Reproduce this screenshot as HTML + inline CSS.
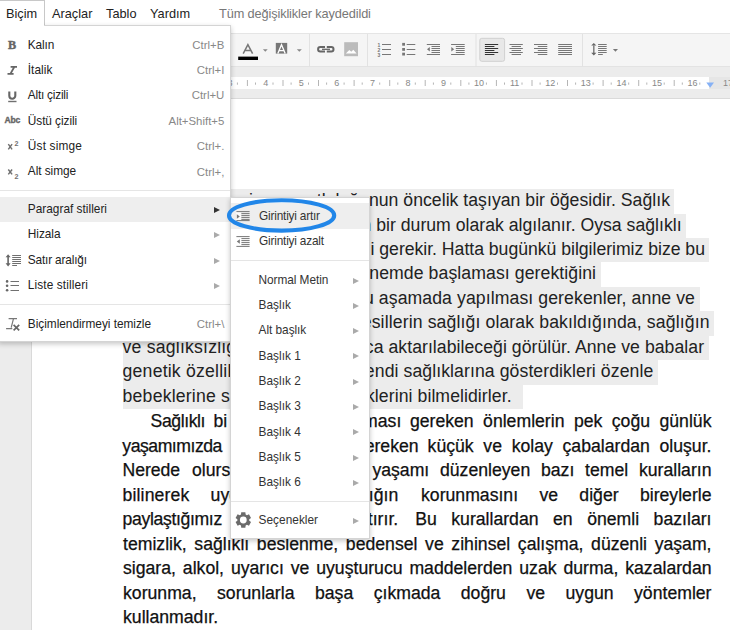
<!DOCTYPE html>
<html><head><meta charset="utf-8">
<style>
*{margin:0;padding:0;box-sizing:border-box}
html,body{width:730px;height:630px;overflow:hidden;background:#fff;font-family:"Liberation Sans",sans-serif;position:relative}
.abs{position:absolute}
svg{position:absolute;overflow:visible}
.mb{position:absolute;top:5.6px;font-size:12.75px;color:#222;line-height:16px;white-space:nowrap}
#toolbar{position:absolute;left:0;top:33px;width:730px;height:34px;background:#f5f5f5;border-top:1px solid #e5e5e5;border-bottom:1px solid #e3e3e3}
#band1{position:absolute;left:0;top:67px;width:730px;height:10px;background:#ececec}
#ruler{position:absolute;left:0;top:77px;width:709px;height:12px;background:#fff}
#band2{position:absolute;left:0;top:89px;width:730px;height:10px;background:#ececec;border-bottom:1px solid #dadada}
#leftgrey{position:absolute;left:0;top:99px;width:32px;height:531px;background:#ececec;border-right:1px solid #d9d9d9}
.tsep{position:absolute;top:38px;width:1px;height:24px;background:#e0e0e0}
.rn{position:absolute;top:78px;font-size:9px;color:#888;line-height:10px;white-space:nowrap}
.menu{position:absolute;background:#fff;border:1px solid #d4d4d4;box-shadow:0 2px 5px rgba(0,0,0,.22)}
.mi{position:absolute;white-space:nowrap;font-size:11.6px;color:#222;line-height:14px}
.sc{position:absolute;white-space:nowrap;font-size:11.2px;color:#888;line-height:14px;text-align:right}
.sep{position:absolute;height:1px;background:#e5e5e5}
.hl{position:absolute;background:#eee}
.ar{position:absolute;width:0;height:0;border-top:3px solid transparent;border-bottom:3px solid transparent;border-left:6px solid #aaa}
.hl1{position:absolute;left:122.5px;height:24.46px;background:#ececec}
.t1{position:absolute;height:24.46px;white-space:pre;font-size:17.65px;color:#222;line-height:20.8px}
.t2{position:absolute;height:24.5px;white-space:pre;font-size:17.65px;color:#111;line-height:20.8px;-webkit-text-stroke:0.25px #111}
.j{text-align:justify;text-align-last:justify;white-space:normal}
</style></head><body>

<!-- menubar -->
<div class="abs" style="left:0;top:0;width:45px;height:26px;border-top:1px solid #c8c8c8;border-right:1px solid #c8c8c8;background:#fff"></div>
<div class="mb" style="left:6px">Biçim</div>
<div class="mb" style="left:52px">Araçlar</div>
<div class="mb" style="left:106px">Tablo</div>
<div class="mb" style="left:150px">Yardım</div>
<div class="mb" style="left:219px;color:#777;letter-spacing:-0.12px">Tüm değişiklikler kaydedildi</div>

<div id="toolbar"></div>
<div id="band1"></div>
<div class="abs" style="left:709px;top:77px;width:21px;height:12px;background:#e6e6e6"></div><div id="ruler"></div>
<div id="band2"></div>
<div id="leftgrey"></div>
<svg style="left:0;top:0" width="730" height="100" viewBox="0 0 730 100">
 <!-- text color A -->
 <path d="M243.2 53.6 L247.9 44.6 L252.6 53.6 M244.8 50.6 H251" stroke="#777" stroke-width="1.5" fill="none"/>
 <rect x="238.2" y="56.6" width="19.8" height="3.4" fill="#000"/>
 <path d="M262.9 49.2 H267.7 L265.3 51.8 Z" fill="#888"/>
 <!-- highlight A -->
 <rect x="275.8" y="42.9" width="11.4" height="10.7" fill="#777"/>
 <path d="M277.8 53.6 L281.5 44.8 L285.2 53.6 M279.1 50.6 H283.9" stroke="#fff" stroke-width="1.3" fill="none"/>
 <path d="M296.8 49.2 H301.8 L299.3 51.8 Z" fill="#888"/>
 <rect x="309" y="34" width="1" height="33" fill="#e2e2e2"/>
 <!-- link -->
 <path d="M325 47.1 H320.3 A2.2 2.2 0 0 0 320.3 51.5 H325 M326.8 47.1 H331.3 A2.2 2.2 0 0 1 331.3 51.5 H326.8" stroke="#666" stroke-width="2" fill="none"/><path d="M322 49.3 H330" stroke="#666" stroke-width="1.3"/>
 <!-- image -->
 <rect x="344.2" y="42.2" width="13.8" height="14" fill="#bbb"/>
 <path d="M345.8 53.6 L349.3 50 L351.3 51.8 L353.3 49.8 L356.6 53.6 Z" fill="#fff"/>
 <rect x="367" y="34" width="1" height="33" fill="#e2e2e2"/>
 <!-- numbered list -->
 <g font-family="Liberation Sans" font-size="5" font-weight="bold" fill="#777"><text x="377.6" y="47">1</text><text x="377.6" y="52">2</text><text x="377.6" y="57">3</text></g>
 <g stroke="#777" stroke-width="1.1"><path d="M382 44.5 H391 M382 49.5 H391 M382 54.5 H391"/></g>
 <!-- bullet list -->
 <g fill="#777"><rect x="402.2" y="42.9" width="2.8" height="2.8"/><rect x="402.2" y="48" width="2.8" height="2.8"/><rect x="402.2" y="52.7" width="2.8" height="2.8"/></g>
 <g stroke="#777" stroke-width="1.1"><path d="M406.7 44.5 H415.3 M406.7 49.5 H415.3 M406.7 54.5 H415.3"/></g>
 <!-- decrease indent -->
 <g stroke="#777" stroke-width="1"><path d="M426.8 44.5 H440 M431.5 46.5 H440 M431.5 48.5 H440 M431.5 50.5 H440 M431.5 52.5 H440 M426.8 54.5 H440"/></g>
 <path d="M429.8 47 V51.4 L427 49.2 Z" fill="#777"/>
 <!-- increase indent -->
 <g stroke="#777" stroke-width="1"><path d="M451.1 44.5 H464.7 M455.8 46.5 H464.7 M455.8 48.5 H464.7 M455.8 50.5 H464.7 M455.8 52.5 H464.7 M451.1 54.5 H464.7"/></g>
 <path d="M451.3 47 V51.4 L454.1 49.2 Z" fill="#777"/>
 <rect x="475.5" y="34" width="1" height="33" fill="#e2e2e2"/>
 <!-- align left pressed -->
 <rect x="479.8" y="38.3" width="24.8" height="23" rx="2" fill="#e8e8e8" stroke="#d0d0d0" stroke-width="1"/>
 <g stroke="#333" stroke-width="1"><path d="M484.9 44.5 H498.2 M484.9 46.5 H494.4 M484.9 48.5 H498.2 M484.9 50.5 H494.4 M484.9 52.5 H498.2 M484.9 54.5 H494.4"/></g>
 <!-- center -->
 <g stroke="#777" stroke-width="1"><path d="M509.5 44.5 H522.8 M511.6 46.5 H521 M509.5 48.5 H522.8 M511.6 50.5 H521 M509.5 52.5 H522.8 M511.6 54.5 H521"/></g>
 <!-- right -->
 <g stroke="#777" stroke-width="1"><path d="M534 44.5 H547.3 M537.8 46.5 H547.3 M534 48.5 H547.3 M537.8 50.5 H547.3 M534 52.5 H547.3 M537.8 54.5 H547.3"/></g>
 <!-- justify -->
 <g stroke="#777" stroke-width="1"><path d="M558.2 44.5 H572 M558.2 46.5 H572 M558.2 48.5 H572 M558.2 50.5 H572 M558.2 52.5 H572 M558.2 54.5 H572"/></g>
 <rect x="582" y="34" width="1" height="33" fill="#e2e2e2"/>
 <!-- line spacing -->
 <path d="M593.8 45.5 V53" stroke="#777" stroke-width="1.4"/>
 <path d="M591.2 45.6 L593.8 42.9 L596.4 45.6 Z M591.2 52.8 L593.8 55.5 L596.4 52.8 Z" fill="#666"/>
 <g stroke="#777" stroke-width="1"><path d="M598.1 44.5 H606.7 M598.1 46.5 H606.7 M598.1 48.5 H606.7 M598.1 50.5 H606.7 M598.1 52.5 H606.7 M598.1 54.5 H602.8"/></g>
 <path d="M612.9 49 H618 L615.45 51.8 Z" fill="#777"/>
</svg>

<svg style="left:0;top:0" width="730" height="100">
<rect x="246.9" y="80" width="1" height="6" fill="#b5b5b5"/>
<rect x="236.9" y="82.5" width="1" height="2.2" fill="#b5b5b5"/>
<rect x="255.0" y="82.5" width="1" height="2.2" fill="#b5b5b5"/>
<rect x="282.5" y="80" width="1" height="6" fill="#b5b5b5"/>
<rect x="272.5" y="82.5" width="1" height="2.2" fill="#b5b5b5"/>
<rect x="290.6" y="82.5" width="1" height="2.2" fill="#b5b5b5"/>
<rect x="318.0" y="80" width="1" height="6" fill="#b5b5b5"/>
<rect x="308.0" y="82.5" width="1" height="2.2" fill="#b5b5b5"/>
<rect x="326.1" y="82.5" width="1" height="2.2" fill="#b5b5b5"/>
<rect x="353.6" y="80" width="1" height="6" fill="#b5b5b5"/>
<rect x="343.6" y="82.5" width="1" height="2.2" fill="#b5b5b5"/>
<rect x="361.7" y="82.5" width="1" height="2.2" fill="#b5b5b5"/>
<rect x="389.2" y="80" width="1" height="6" fill="#b5b5b5"/>
<rect x="379.2" y="82.5" width="1" height="2.2" fill="#b5b5b5"/>
<rect x="397.3" y="82.5" width="1" height="2.2" fill="#b5b5b5"/>
<rect x="424.7" y="80" width="1" height="6" fill="#b5b5b5"/>
<rect x="414.8" y="82.5" width="1" height="2.2" fill="#b5b5b5"/>
<rect x="432.9" y="82.5" width="1" height="2.2" fill="#b5b5b5"/>
<rect x="460.3" y="80" width="1" height="6" fill="#b5b5b5"/>
<rect x="450.3" y="82.5" width="1" height="2.2" fill="#b5b5b5"/>
<rect x="468.4" y="82.5" width="1" height="2.2" fill="#b5b5b5"/>
<rect x="495.9" y="80" width="1" height="6" fill="#b5b5b5"/>
<rect x="485.9" y="82.5" width="1" height="2.2" fill="#b5b5b5"/>
<rect x="504.0" y="82.5" width="1" height="2.2" fill="#b5b5b5"/>
<rect x="531.5" y="80" width="1" height="6" fill="#b5b5b5"/>
<rect x="521.5" y="82.5" width="1" height="2.2" fill="#b5b5b5"/>
<rect x="539.6" y="82.5" width="1" height="2.2" fill="#b5b5b5"/>
<rect x="567.0" y="80" width="1" height="6" fill="#b5b5b5"/>
<rect x="557.0" y="82.5" width="1" height="2.2" fill="#b5b5b5"/>
<rect x="575.1" y="82.5" width="1" height="2.2" fill="#b5b5b5"/>
<rect x="602.6" y="80" width="1" height="6" fill="#b5b5b5"/>
<rect x="592.6" y="82.5" width="1" height="2.2" fill="#b5b5b5"/>
<rect x="610.7" y="82.5" width="1" height="2.2" fill="#b5b5b5"/>
<rect x="638.2" y="80" width="1" height="6" fill="#b5b5b5"/>
<rect x="628.2" y="82.5" width="1" height="2.2" fill="#b5b5b5"/>
<rect x="646.3" y="82.5" width="1" height="2.2" fill="#b5b5b5"/>
<rect x="673.7" y="80" width="1" height="6" fill="#b5b5b5"/>
<rect x="663.7" y="82.5" width="1" height="2.2" fill="#b5b5b5"/>
<rect x="681.8" y="82.5" width="1" height="2.2" fill="#b5b5b5"/>
<rect x="699.3" y="82.5" width="1" height="2.2" fill="#b5b5b5"/>
<path d="M706.3 82.6 H714 L710.15 87.8 Z" fill="#86b1f5"/>
</svg>
<div class="rn" style="left:230.1px;width:20px;margin-left:-10px;text-align:center">3</div>
<div class="rn" style="left:265.7px;width:20px;margin-left:-10px;text-align:center">4</div>
<div class="rn" style="left:301.2px;width:20px;margin-left:-10px;text-align:center">5</div>
<div class="rn" style="left:336.8px;width:20px;margin-left:-10px;text-align:center">6</div>
<div class="rn" style="left:372.4px;width:20px;margin-left:-10px;text-align:center">7</div>
<div class="rn" style="left:408.0px;width:20px;margin-left:-10px;text-align:center">8</div>
<div class="rn" style="left:443.5px;width:20px;margin-left:-10px;text-align:center">9</div>
<div class="rn" style="left:479.1px;width:20px;margin-left:-10px;text-align:center">10</div>
<div class="rn" style="left:514.7px;width:20px;margin-left:-10px;text-align:center">11</div>
<div class="rn" style="left:550.2px;width:20px;margin-left:-10px;text-align:center">12</div>
<div class="rn" style="left:585.8px;width:20px;margin-left:-10px;text-align:center">13</div>
<div class="rn" style="left:621.4px;width:20px;margin-left:-10px;text-align:center">14</div>
<div class="rn" style="left:656.9px;width:20px;margin-left:-10px;text-align:center">15</div>
<div class="rn" style="left:692.5px;width:20px;margin-left:-10px;text-align:center">16</div>
<div class="rn" style="left:728.1px;width:20px;margin-left:-10px;text-align:center">17</div>
<div class="hl1" style="top:189.10px;width:551.90px"></div>
<div class="abs" style="left:369px;top:190.10px;width:361px;height:25px;overflow:hidden"><div class="t1" style="top:0;right:55.10px;letter-spacing:0.025px">i ana mutluluğunun öncelik taşıyan bir öğesidir. Sağlık </div></div>
<div class="abs" style="left:123px;top:190.10px;width:246px;height:6.10px;overflow:hidden"><div class="t1" style="top:0;right:-305.90px;letter-spacing:0.025px">i ana mutluluğunun öncelik taşıyan bir öğesidir. Sağlık </div></div>
<div class="hl1" style="top:213.56px;width:563.50px"></div>
<div class="t1" style="top:214.56px;right:43.50px;letter-spacing:0.011px">olan bir durum olarak algılanır. Oysa sağlıklı </div>
<div class="hl1" style="top:238.02px;width:586.80px"></div>
<div class="t1" style="top:239.02px;right:20.20px;letter-spacing:-0.021px">i gerekir. Hatta bugünkü bilgilerimiz bize bu </div>
<div class="hl1" style="top:262.48px;width:478.10px"></div>
<div class="t1" style="top:263.48px;right:128.90px;letter-spacing:0.085px">nemde başlaması gerektiğini </div>
<div class="hl1" style="top:286.94px;width:577.00px"></div>
<div class="t1" style="top:287.94px;right:30.00px;letter-spacing:0.091px">u aşamada yapılması gerekenler, anne ve </div>
<div class="hl1" style="top:311.40px;width:591.60px"></div>
<div class="t1" style="top:312.40px;right:15.40px;letter-spacing:0.119px">esillerin sağlığı olarak bakıldığında, sağlığın </div>
<div class="hl1" style="top:335.86px;width:586.00px"></div>
<div class="t1" style="top:336.86px;left:122.6px;letter-spacing:0.2px">ve sağlıksızlığın </div>
<div class="t1" style="top:336.86px;right:21.00px;letter-spacing:0.042px">ca aktarılabileceği görülür. Anne ve babalar </div>
<div class="hl1" style="top:360.32px;width:535.30px"></div>
<div class="t1" style="top:361.32px;left:122.6px;letter-spacing:0.2px">genetik özelliklerinin </div>
<div class="t1" style="top:361.32px;right:71.70px;letter-spacing:0.082px">endi sağlıklarına gösterdikleri özenle </div>
<div class="hl1" style="top:384.78px;width:400.80px"></div>
<div class="t1" style="top:385.78px;left:122.6px;letter-spacing:0.2px">bebeklerine sağlıklı </div>
<div class="t1" style="top:385.78px;right:218.40px;letter-spacing:0.069px">klerini bilmelidirler.</div>
<div class="t2" style="top:411.24px;left:150.60px;letter-spacing:-0.432px">Sağlıklı</div>
<div class="t2" style="top:411.24px;left:213.50px;letter-spacing:0.000px">bi</div>
<div class="t2" style="top:411.24px;right:328.70px">ması</div>
<div class="t2 j" style="top:411.24px;left:409.90px;width:301.60px">gereken önlemlerin pek çoğu günlük</div>
<div class="t2" style="top:435.74px;left:122.30px;letter-spacing:-0.482px">yaşamımızda</div>
<div class="t2" style="top:435.74px;right:311.40px">gereken</div>
<div class="t2 j" style="top:435.74px;left:427.60px;width:283.90px">küçük ve kolay çabalardan oluşur.</div>
<div class="t2" style="top:460.24px;left:122.50px;letter-spacing:-0.077px">Nerede</div>
<div class="t2" style="top:460.24px;left:192.00px;letter-spacing:0.000px">olursak</div>
<div class="t2 j" style="top:460.24px;left:372.40px;width:339.10px">yaşamı düzenleyen bazı temel kuralların</div>
<div class="t2" style="top:484.74px;left:122.50px;letter-spacing:0.144px">bilinerek</div>
<div class="t2" style="top:484.74px;left:210.60px;letter-spacing:0.000px">uygulanması</div>
<div class="t2" style="top:484.74px;right:331.80px">sağlığın</div>
<div class="t2 j" style="top:484.74px;left:421.00px;width:290.50px">korunmasını ve diğer bireylerle</div>
<div class="t2" style="top:509.24px;left:122.50px;letter-spacing:-0.349px">paylaştığımız</div>
<div class="t2" style="top:509.24px;right:331.80px">artırır.</div>
<div class="t2 j" style="top:509.24px;left:415.20px;width:296.30px">Bu kurallardan en önemli bazıları</div>
<div class="t2 j" style="top:533.74px;left:123.00px;width:588.50px">temizlik, sağlıklı beslenme, bedensel ve zihinsel çalışma, düzenli yaşam,</div>
<div class="t2 j" style="top:558.24px;left:123.00px;width:588.50px">sigara, alkol, uyarıcı ve uyuşturucu maddelerden uzak durma, kazalardan</div>
<div class="t2 j" style="top:582.74px;left:123.00px;width:588.50px">korunma, sorunlarla başa çıkmada doğru ve uygun yöntemler</div>
<div class="t2" style="top:607.24px;left:123.00px;letter-spacing:0.000px">kullanmadır.</div>
<div class="menu" style="left:-2px;top:25px;width:233px;height:317px"></div>
<div class="abs" style="left:0;top:22px;width:44px;height:5px;background:#fff"></div>
<div class="mi" style="left:27.80px;top:37.59px;font-size:11.85px;color:#222;letter-spacing:-0.120px">Kalın</div>
<div class="sc" style="right:505.70px;top:37.75px;font-size:11.40px">Ctrl+B</div>
<div class="mi" style="left:27.80px;top:62.89px;font-size:11.85px;color:#222;letter-spacing:0.033px">İtalik</div>
<div class="sc" style="right:505.70px;top:63.05px;font-size:11.40px">Ctrl+I</div>
<div class="mi" style="left:27.80px;top:88.29px;font-size:11.85px;color:#222;letter-spacing:-0.218px">Altı çizili</div>
<div class="sc" style="right:505.70px;top:88.45px;font-size:11.40px">Ctrl+U</div>
<div class="mi" style="left:27.80px;top:113.69px;font-size:11.85px;color:#222;letter-spacing:-0.064px">Üstü çizili</div>
<div class="sc" style="right:505.70px;top:113.85px;font-size:11.40px">Alt+Shift+5</div>
<div class="mi" style="left:27.80px;top:139.09px;font-size:11.85px;color:#222;letter-spacing:0.189px">Üst simge</div>
<div class="sc" style="right:505.70px;top:139.25px;font-size:11.40px">Ctrl+.</div>
<div class="mi" style="left:27.80px;top:164.49px;font-size:11.85px;color:#222;letter-spacing:-0.044px">Alt simge</div>
<div class="sc" style="right:505.70px;top:164.65px;font-size:11.40px">Ctrl+,</div>
<div class="sep" style="left:0;top:190px;width:230px"></div>
<div class="hl" style="left:0;top:196.7px;width:230px;height:25.1px"></div>
<div class="mi" style="left:27.80px;top:202.49px;font-size:11.85px;color:#222;letter-spacing:0.012px">Paragraf stilleri</div>
<div class="ar" style="left:214.0px;top:207.1px;border-left-color:#333"></div>
<div class="mi" style="left:27.80px;top:227.39px;font-size:11.85px;color:#222;letter-spacing:-0.033px">Hizala</div>
<div class="ar" style="left:214.0px;top:232.0px;border-left-color:#aaa"></div>
<div class="mi" style="left:27.80px;top:252.99px;font-size:11.85px;color:#222;letter-spacing:-0.169px">Satır aralığı</div>
<div class="ar" style="left:214.0px;top:257.6px;border-left-color:#aaa"></div>
<div class="mi" style="left:27.80px;top:278.49px;font-size:11.85px;color:#222;letter-spacing:0.121px">Liste stilleri</div>
<div class="ar" style="left:214.0px;top:283.1px;border-left-color:#aaa"></div>
<div class="sep" style="left:0;top:304px;width:230px"></div>
<div class="mi" style="left:27.80px;top:316.89px;font-size:11.85px;color:#222;letter-spacing:-0.022px">Biçimlendirmeyi temizle</div>
<div class="sc" style="right:505.70px;top:317.05px;font-size:11.40px">Ctrl+\</div>
<div class="menu" style="left:230px;top:196.5px;width:140px;height:342px"></div>
<div class="hl" style="left:231px;top:202.6px;width:138px;height:26.1px"></div>
<div class="mi" style="left:259.10px;top:208.69px;font-size:11.85px;color:#333;letter-spacing:-0.207px">Girintiyi artır</div>
<div class="mi" style="left:259.10px;top:234.49px;font-size:11.85px;color:#333;letter-spacing:-0.207px">Girintiyi azalt</div>
<div class="sep" style="left:231px;top:260px;width:138px"></div>
<div class="mi" style="left:258.60px;top:272.89px;font-size:11.85px;color:#333;letter-spacing:-0.067px">Normal Metin</div>
<div class="ar" style="left:353.0px;top:277.5px;border-left-color:#aaa"></div>
<div class="mi" style="left:258.60px;top:298.19px;font-size:11.85px;color:#333;letter-spacing:0.000px">Başlık</div>
<div class="ar" style="left:353.0px;top:302.8px;border-left-color:#aaa"></div>
<div class="mi" style="left:258.60px;top:323.49px;font-size:11.85px;color:#333;letter-spacing:-0.040px">Alt başlık</div>
<div class="ar" style="left:353.0px;top:328.1px;border-left-color:#aaa"></div>
<div class="mi" style="left:258.60px;top:348.79px;font-size:11.85px;color:#333;letter-spacing:0.000px">Başlık 1</div>
<div class="ar" style="left:353.0px;top:353.4px;border-left-color:#aaa"></div>
<div class="mi" style="left:258.60px;top:374.09px;font-size:11.85px;color:#333;letter-spacing:0.000px">Başlık 2</div>
<div class="ar" style="left:353.0px;top:378.7px;border-left-color:#aaa"></div>
<div class="mi" style="left:258.60px;top:399.39px;font-size:11.85px;color:#333;letter-spacing:0.000px">Başlık 3</div>
<div class="ar" style="left:353.0px;top:404.0px;border-left-color:#aaa"></div>
<div class="mi" style="left:258.60px;top:424.69px;font-size:11.85px;color:#333;letter-spacing:0.000px">Başlık 4</div>
<div class="ar" style="left:353.0px;top:429.3px;border-left-color:#aaa"></div>
<div class="mi" style="left:258.60px;top:449.99px;font-size:11.85px;color:#333;letter-spacing:0.000px">Başlık 5</div>
<div class="ar" style="left:353.0px;top:454.6px;border-left-color:#aaa"></div>
<div class="mi" style="left:258.60px;top:475.29px;font-size:11.85px;color:#333;letter-spacing:0.000px">Başlık 6</div>
<div class="ar" style="left:353.0px;top:479.9px;border-left-color:#aaa"></div>
<div class="sep" style="left:231px;top:501px;width:138px"></div>
<div class="mi" style="left:258.60px;top:513.29px;font-size:11.85px;color:#333;letter-spacing:0.020px">Seçenekler</div>
<div class="ar" style="left:353.0px;top:517.9px;border-left-color:#aaa"></div><svg style="left:0;top:0" width="730" height="630">
 <text x="8.0" y="48.7" font-family="Liberation Serif" font-weight="bold" font-size="12.2" fill="#666" stroke="#666" stroke-width="0.45">B</text>
 <path d="M10.6 66.8 H17 M7.5 73.9 H13.6 M14.4 66.8 L10.4 73.9" stroke="#666" stroke-width="1.8" fill="none"/>
 <path d="M9.3 91.5 V95.7 a3 3 0 0 0 6 0 V91.5" stroke="#666" stroke-width="2.1" fill="none"/>
 <rect x="8.2" y="100.8" width="8.3" height="1.4" fill="#707070"/>
 <text x="4.6" y="123.4" font-family="Liberation Sans" font-weight="bold" font-size="8.6" fill="#666" stroke="#666" stroke-width="0.35" letter-spacing="-0.25">Abc</text>
 <path d="M8.3 144.1 L12.1 149.4 M12.1 144.1 L8.3 149.4" stroke="#707070" stroke-width="1.45"/>
 <text x="14.6" y="146" font-family="Liberation Sans" font-weight="bold" font-size="7.2" fill="#707070">2</text>
 <path d="M8.3 169.5 L12.1 174.4 M12.1 169.5 L8.3 174.4" stroke="#707070" stroke-width="1.45"/>
 <text x="14.6" y="179" font-family="Liberation Sans" font-weight="bold" font-size="7.2" fill="#707070">2</text>
 <!-- satir araligi -->
 <path d="M8.1 256 V264.6" stroke="#666" stroke-width="1.6"/>
 <path d="M5.6 257.3 L8.1 254.2 L10.6 257.3 Z M5.6 263.3 L8.1 266.4 L10.6 263.3 Z" fill="#666"/>
 <g stroke="#707070" stroke-width="1"><path d="M12.2 255.5 H21 M12.2 257.5 H21 M12.2 259.5 H21 M12.2 261.5 H21 M12.2 263.5 H21 M12.2 265.5 H17"/></g>
 <!-- liste -->
 <g fill="#666"><circle cx="7.1" cy="281.4" r="1.3"/><circle cx="7.1" cy="285.8" r="1.3"/><circle cx="7.1" cy="290.3" r="1.3"/></g>
 <g stroke="#707070" stroke-width="1"><path d="M10.5 281.5 H19 M10.5 285.5 H19 M10.5 290.5 H19"/></g>
 <!-- Tx -->
 <path d="M8.6 318.6 H17 M13.5 318.6 L11.2 327.6 M6.1 328.6 H12.3" stroke="#777" stroke-width="1.2" fill="none"/>
 <path d="M13.6 324.9 L19.2 330.3 M19.2 324.9 L13.6 330.3" stroke="#666" stroke-width="1.7"/>
 <!-- girintiyi artir -->
 <rect x="236" y="211" width="5" height="9.5" fill="#fafafa"/>
 <g stroke="#777" stroke-width="1"><path d="M236.4 211.6 H249.6 M241.4 213.6 H249.6 M241.4 215.6 H249.6 M241.4 217.6 H249.6 M241.4 219.6 H249.6 M236.4 220.6 H249.6"/></g>
 <path d="M236.8 214.3 V218.7 L239.8 216.5 Z" fill="#777"/>
 <!-- girintiyi azalt -->
 <g stroke="#777" stroke-width="1"><path d="M236.4 236.6 H249.6 M241.4 238.6 H249.6 M241.4 240.6 H249.6 M241.4 242.6 H249.6 M241.4 244.6 H249.6 M236.4 246.4 H249.6"/></g>
 <path d="M239.8 239.3 V243.7 L236.8 241.5 Z" fill="#777"/>
 <path d="M240.96 514.47 L241.24 512.27 L245.36 512.27 L245.64 514.47 L246.92 515.21 L248.97 514.35 L251.02 517.92 L249.25 519.26 L249.25 520.74 L251.02 522.08 L248.97 525.65 L246.92 524.79 L245.64 525.53 L245.36 527.73 L241.24 527.73 L240.96 525.53 L239.68 524.79 L237.63 525.65 L235.58 522.08 L237.35 520.74 L237.35 519.26 L235.58 517.92 L237.63 514.35 L239.68 515.21 Z M243.30 520.00 m-3.4 0 a3.4 3.4 0 1 0 6.8 0 a3.4 3.4 0 1 0 -6.8 0 Z" fill="#6b6b6b" fill-rule="evenodd"/>
 <ellipse cx="281.6" cy="215.4" rx="52.6" ry="15.2" fill="none" stroke="#2186e8" stroke-width="4.1"/>
</svg>
</body></html>
